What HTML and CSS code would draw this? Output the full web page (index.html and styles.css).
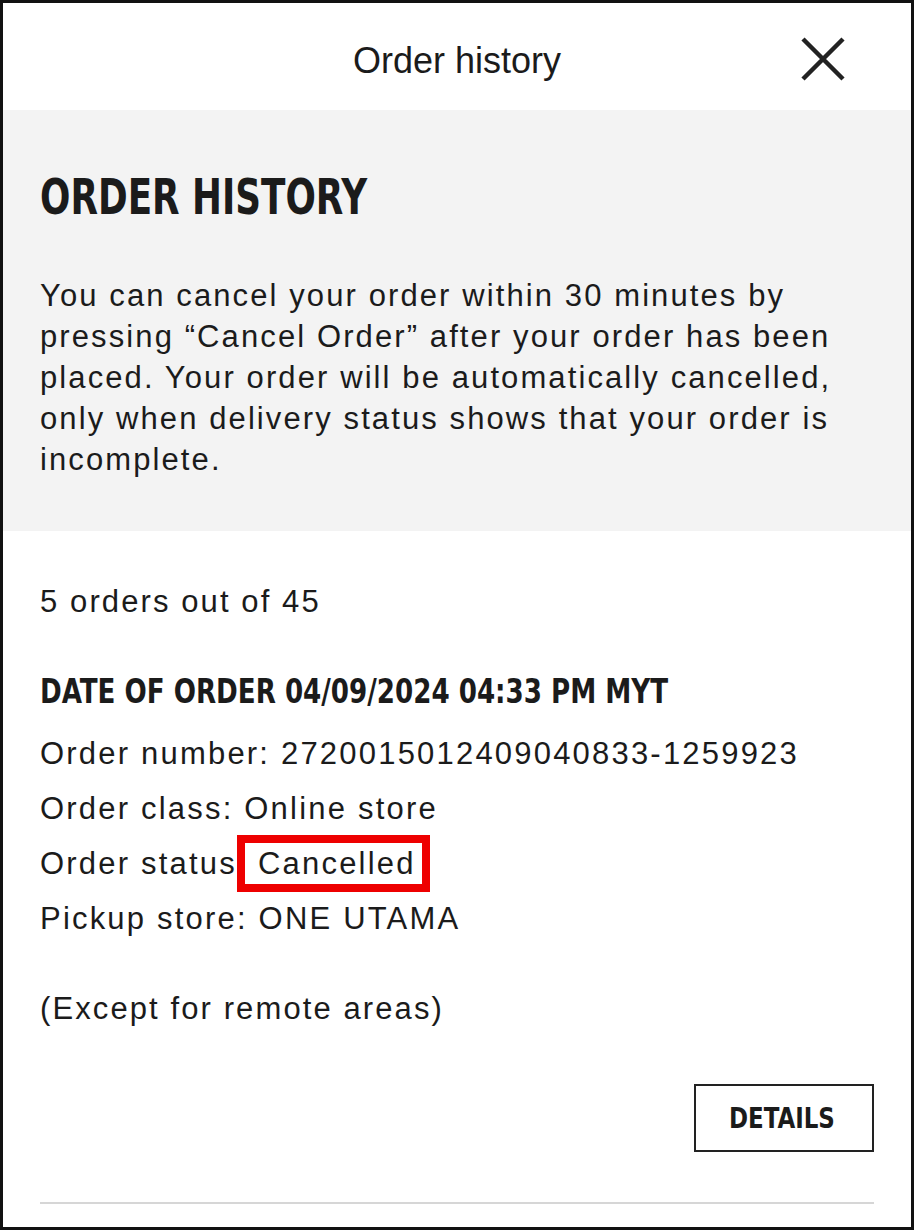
FILE: index.html
```html
<!DOCTYPE html>
<html>
<head>
    <link rel="stylesheet" href="styles.css">
</head>
<body>
    <div class="frame">
        <div class="topbar">
            <span class="topbar-title">Order history</span>
            <button class="close" aria-label="Close">
                <svg width="46" height="46" viewBox="0 0 46 46"><path d="M3 3 L43 43 M43 3 L3 43" stroke="#222" stroke-width="4.5" fill="none"/></svg>
            </button>
        </div>

        <div class="intro">
            <h1 class="title"><span class="squeeze">ORDER HISTORY</span></h1>
            <p class="note">You can cancel your order within 30 minutes by pressing “Cancel Order” after your order has been placed. Your order will be automatically cancelled, only when delivery status shows that your order is incomplete.</p>
        </div>

        <div class="orders">
            <p class="count">5 orders out of 45</p>
            <div class="order">
                <h2 class="order-date"><span class="squeeze">DATE OF ORDER 04/09/2024 04:33 PM MYT</span></h2>
                <ul class="order-info">
                    <li>Order number: 2720015012409040833-1259923</li>
                    <li>Order class: Online store</li>
                    <li>Order status<span class="mark">Cancelled</span></li>
                    <li>Pickup store: ONE UTAMA</li>
                </ul>
                <p class="order-extra">(Except for remote areas)</p>
                <div class="order-actions">
                    <button class="details"><span class="squeeze">DETAILS</span></button>
                </div>
            </div>
        </div>
    </div>
</body>
</html>
```

FILE: styles.css
```css
body { margin: 0; background: white; font-family: "Liberation Sans", Arial, sans-serif; color: #1b1b1b; }
.frame { box-sizing: border-box; height: 1230px; border: 3px solid #111; overflow: hidden; }
.topbar { height: 107px; display: flex; align-items: center; justify-content: center; position: relative; }
.topbar-title { font-size: 36px; padding-top: 8px; }
.close { position: absolute; right: 65px; top: 33px; background: none; border: 0; padding: 0; width: 46px; height: 46px; }
.squeeze { display: inline-block; transform-origin: left center; }
.intro { background: #f3f3f3; padding: 62px 37px 51px; }
.title { margin: 0; font-family: "DejaVu Sans Condensed", "DejaVu Sans", sans-serif; font-stretch: condensed; font-size: 50px; font-weight: bold; line-height: 50px; white-space: nowrap; }
.title .squeeze { transform: scaleX(0.795); }
.note { margin: 53px 0 0; font-size: 31px; line-height: 41px; letter-spacing: 2.1px; }
.orders { padding: 52px 37px 0; }
.count { margin: 0; font-size: 31px; line-height: 38px; letter-spacing: 2.1px; }
.order { margin-top: 52px; border-bottom: 2px solid #d6d6d6; padding-bottom: 50px; }
.order-date { margin: 0; font-family: "DejaVu Sans Condensed", "DejaVu Sans", sans-serif; font-stretch: condensed; font-size: 34px; font-weight: bold; line-height: 36px; white-space: nowrap; }
.order-date .squeeze { transform: scaleX(0.855); }
.order-info { list-style: none; margin: 17px 0 0; padding: 0; font-size: 31px; line-height: 55px; letter-spacing: 2.2px; }
.mark { display: inline-block; border: 8px solid #ee0000; padding: 0 6px 0 13px; line-height: 41px; margin: -1px 0; }
.order-extra { margin: 44px 0 0; font-size: 31px; line-height: 38px; letter-spacing: 2.1px; }
.order-actions { display: flex; justify-content: flex-end; margin-top: 56px; }
.details { box-sizing: border-box; width: 180px; height: 68px; background: white; border: 2px solid #222; font-family: "DejaVu Sans Condensed", "DejaVu Sans", sans-serif; font-stretch: condensed; font-size: 29px; font-weight: bold; color: #1b1b1b; padding: 0 0 0 33px; text-align: left; }
.details .squeeze { transform: scaleX(0.88); }
```
